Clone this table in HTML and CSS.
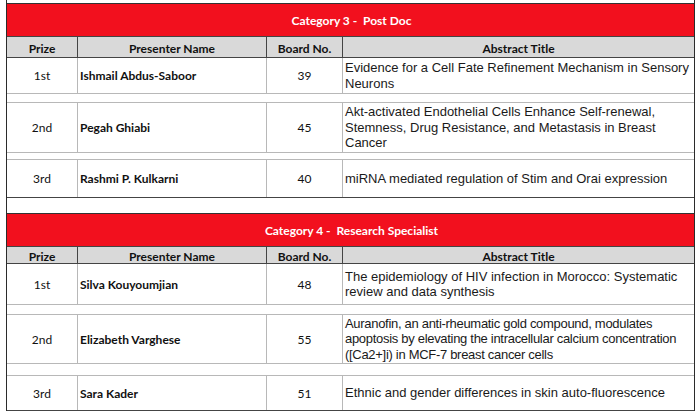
FILE: index.html
```html
<!DOCTYPE html>
<html>
<head>
<meta charset="utf-8">
<link rel="stylesheet" href="styles.css">
</head>
<body>
<div class="sheet">
  <section class="cat">
    <div class="cat-title">Category 3 -&nbsp; Post Doc</div>
    <div class="row head h22">
      <div class="c">Prize</div><div class="c">Presenter Name</div><div class="c">Board No.</div><div class="c">Abstract Title</div>
    </div>
    <div class="row body h36">
      <div class="c prize">1st</div><div class="c name">Ishmail Abdus-Saboor</div><div class="c board">39</div><div class="c abs">Evidence for a Cell Fate Refinement Mechanism in Sensory Neurons</div>
    </div>
    <div class="gap h9"></div>
    <div class="row body h50">
      <div class="c prize">2nd</div><div class="c name">Pegah Ghiabi</div><div class="c board">45</div><div class="c abs">Akt-activated Endothelial Cells Enhance Self-renewal, Stemness, Drug Resistance, and Metastasis in Breast Cancer</div>
    </div>
    <div class="gap h7"></div>
    <div class="row body last h38">
      <div class="c prize">3rd</div><div class="c name">Rashmi P. Kulkarni</div><div class="c board">40</div><div class="c abs">miRNA mediated regulation of Stim and Orai expression</div>
    </div>
  </section>
  <div class="blank"></div>
  <section class="cat">
    <div class="cat-title">Category 4 -&nbsp; Research Specialist</div>
    <div class="row head h18">
      <div class="c">Prize</div><div class="c">Presenter Name</div><div class="c">Board No.</div><div class="c">Abstract Title</div>
    </div>
    <div class="row body h41">
      <div class="c prize">1st</div><div class="c name">Silva Kouyoumjian</div><div class="c board">48</div><div class="c abs">The epidemiology of HIV infection in Morocco: Systematic review and data synthesis</div>
    </div>
    <div class="gap h10"></div>
    <div class="row body h49">
      <div class="c prize">2nd</div><div class="c name">Elizabeth Varghese</div><div class="c board">55</div><div class="c abs tight">Auranofin, an anti-rheumatic gold compound, modulates apoptosis by elevating the intracellular calcium concentration ([Ca2+]i) in MCF-7 breast cancer cells</div>
    </div>
    <div class="gap h12"></div>
    <div class="row body last h35">
      <div class="c prize">3rd</div><div class="c name">Sara Kader</div><div class="c board">51</div><div class="c abs">Ethnic and gender differences in skin auto-fluorescence</div>
    </div>
  </section>
</div>
</body>
</html>
```
FILE: styles.css
```css
html, body {
  margin: 0;
  padding: 0;
  background: #ffffff;
}
.sheet {
  margin-left: 6px;
  width: 689px;
  box-sizing: border-box;
  border-left: 1px solid #2b2b2b;
  border-right: 1px solid #2b2b2b;
  padding-top: 3px;
  font-family: Lato, "Open Sans", sans-serif;
  color: #111;
}
.cat {
  border-top: 1px solid #333;
}
.cat-title {
  height: 32px;
  background: #f2101e;
  color: #fff;
  font-weight: 700;
  font-size: 12px;
  display: flex;
  align-items: center;
  justify-content: center;
  padding-left: 2px;
  white-space: pre;
}
.row {
  display: grid;
  grid-template-columns: 70px 189px 76px 1fr;
  box-sizing: border-box;
}
.row .c {
  display: flex;
  align-items: center;
  box-sizing: border-box;
}
.row .c + .c {
  border-left: 1px solid #b8b8b8;
}
.head {
  background: #d9d9d9;
  border-top: 1px solid #444;
  border-bottom: 1px solid #444;
}
.head .c {
  justify-content: center;
  font-weight: 700;
  font-size: 12px;
  padding-top: 2px;
}
.head .c + .c {
  border-left: 1px solid #444;
}
.body {
  border-bottom: 1px solid #b8b8b8;
}
.body.last {
  border-bottom: 1px solid #444;
}
.prize, .board {
  justify-content: center;
  font-size: 12px;
}
.name {
  font-weight: 700;
  font-size: 12px;
  padding-left: 2px;
}
.abs {
  font-family: "Liberation Sans", Arial, sans-serif;
  font-size: 13px;
  line-height: 15.5px;
  padding-left: 2px;
  padding-right: 2px;
  color: #1a1a1a;
}
.abs.tight {
  letter-spacing: -0.3px;
  padding-right: 0;
}
.gap {
  box-sizing: border-box;
  border-bottom: 1px solid #b8b8b8;
}
.blank {
  height: 15px;
}
.h7 { height: 7px; }
.h9 { height: 9px; }
.h10 { height: 10px; }
.h12 { height: 12px; }
.h18 { height: 18px; }
.h22 { height: 22px; }
.h35 { height: 35px; }
.h36 { height: 36px; }
.h38 { height: 38px; }
.h41 { height: 41px; }
.h49 { height: 49px; }
.h50 { height: 50px; }
```
